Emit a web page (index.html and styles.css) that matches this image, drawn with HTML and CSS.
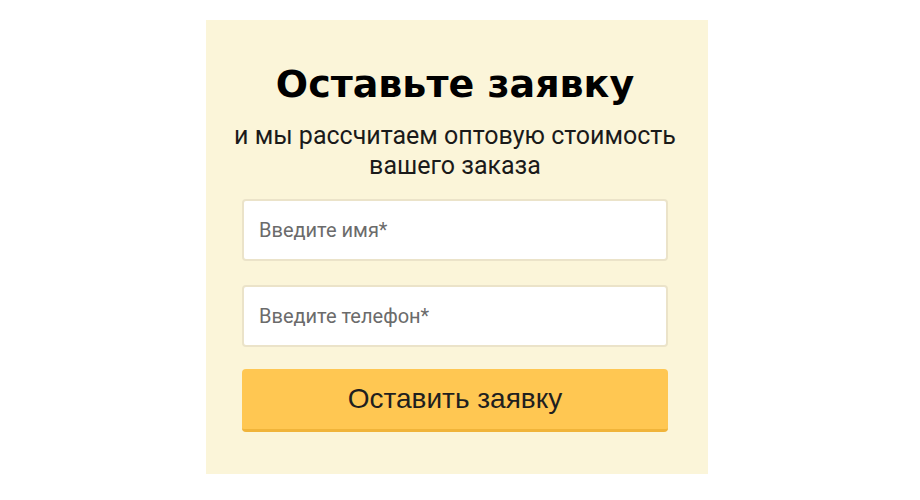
FILE: index.html
```html
<!DOCTYPE html>
<html lang="ru">
<head>
  <meta charset="UTF-8" />
  <meta name="viewport" content="width=device-width, initial-scale=1.0" />
  <title>Оставьте заявку</title>
  <link rel="stylesheet" href="styles.css">
</head>
<body>
  <form class="order-form" id="orderForm">
    <h2 class="order-title">Оставьте заявку</h2>
    <p class="order-subtitle">и мы рассчитаем оптовую стоимость вашего заказа</p>

    <input type="text" class="order-input" id="name" placeholder="Введите имя*" required />
    <input type="tel" class="order-input" id="phone" placeholder="Введите телефон*" required />

    <button type="submit" class="order-button">Оставить заявку</button>
  </form>
</body>
</html>
```

FILE: styles.css
```css
body {
  margin: 0;
  background-color: #ffffff;
}
.order-form {
  box-sizing: border-box;
  width: 502px;
  height: 454px;
  margin: 20px 0 0 206px;
  padding: 0 40px 0 36px;
  background-color: #fbf5d9;
  display: flex;
  flex-direction: column;
}
.order-title {
  margin: 42px 0 0;
  font-family: "DejaVu Sans", sans-serif;
  font-weight: bold;
  font-size: 38px;
  line-height: 44px;
  text-align: center;
  color: #000000;
}
.order-subtitle {
  margin: 15px -10px 18px;
  font-family: Roboto, sans-serif;
  font-size: 25px;
  line-height: 30px;
  text-align: center;
  color: #1a1a1a;
}
.order-input {
  box-sizing: border-box;
  width: 100%;
  height: 62px;
  margin-bottom: 24px;
  padding: 0 15px;
  border: 2px solid #ebe3c9;
  border-radius: 4px;
  background-color: #ffffff;
  font-family: Roboto, sans-serif;
  font-size: 20px;
  color: #333333;
}
.order-input::placeholder {
  color: #6b6b6b;
}
.order-button {
  box-sizing: border-box;
  width: 100%;
  height: 63px;
  margin-top: -2px;
  border: none;
  border-bottom: 3px solid #f0b43a;
  border-radius: 4px;
  background-color: #ffc752;
  font-family: "Liberation Sans", Arial, sans-serif;
  font-size: 28px;
  color: #1f1f1f;
  cursor: pointer;
}
```
